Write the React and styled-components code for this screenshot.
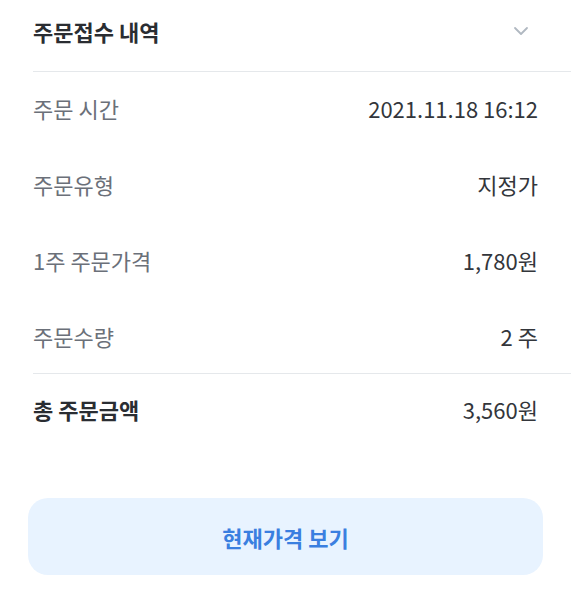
import React from "react";
import styled, { createGlobalStyle } from "styled-components";

const Global = createGlobalStyle`
  html, body { margin: 0; padding: 0; background: #ffffff; }
  body { font-family: "Noto Sans CJK KR", "Noto Sans", sans-serif; }
`;

const Page = styled.div`
  width: 571px;
  height: 600px;
  background: #fff;
  display: flex;
  flex-direction: column;
`;

const Header = styled.div`
  height: 72px;
  box-sizing: border-box;
  display: flex;
  align-items: center;
  justify-content: space-between;
  margin-left: 33px;
  padding: 0 42px 10px 0;
  border-bottom: 1px solid #e5e8eb;
`;

const Title = styled.h2`
  margin: 0;
  font-size: 22px;
  font-weight: 700;
  color: #2a2d32;
`;

const Section = styled.div`
  display: flex;
  flex-direction: column;
  gap: 46px;
  margin-left: 33px;
  padding: ${(p) => p.$pad};
  border-bottom: ${(p) => (p.$divided ? "1px solid #e5e8eb" : "none")};
`;

const Row = styled.div`
  display: flex;
  justify-content: space-between;
  align-items: center;
  height: 30px;
  font-size: 22px;
`;

const Label = styled.span`
  color: ${(p) => (p.$strong ? "#2a2d32" : "#6b7079")};
  font-weight: ${(p) => (p.$strong ? 700 : 400)};
`;

const Value = styled.span`
  color: #33363b;
  font-weight: 400;
`;

const Button = styled.button`
  margin: 74px 28px 0;
  height: 77px;
  border: none;
  border-radius: 20px;
  background: #e8f3ff;
  color: #3a7fe0;
  font-family: inherit;
  font-size: 22px;
  font-weight: 700;
  cursor: pointer;
`;

const Chevron = () => (
  <svg width="16" height="10" viewBox="0 0 16 10" fill="none">
    <path d="M2 2l6 6 6-6" stroke="#b0b8c1" strokeWidth="1.8" strokeLinecap="round" strokeLinejoin="round" />
  </svg>
);

const rows = [
  ["주문 시간", "2021.11.18 16:12"],
  ["주문유형", "지정가"],
  ["1주 주문가격", "1,780원"],
  ["주문수량", "2 주"],
];

export default function App() {
  return (
    <Page>
      <Global />
      <Header>
        <Title>주문접수 내역</Title>
        <Chevron />
      </Header>
      <Section $pad="21px 33px 22px 0" $divided>
        {rows.map(([l, v]) => (
          <Row key={l}>
            <Label>{l}</Label>
            <Value>{v}</Value>
          </Row>
        ))}
      </Section>
      <Section $pad="20px 33px 0 0">
        <Row>
          <Label $strong>총 주문금액</Label>
          <Value>3,560원</Value>
        </Row>
      </Section>
      <Button>현재가격 보기</Button>
    </Page>
  );
}
